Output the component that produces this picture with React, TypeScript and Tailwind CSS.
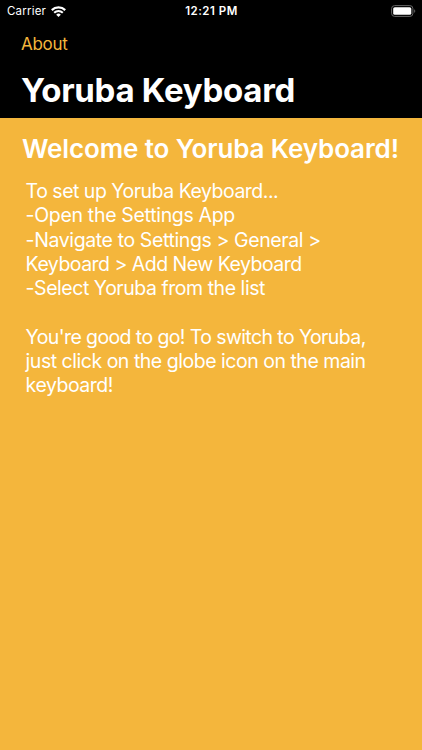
import React from "react";

const steps = [
  { text: "To set up Yoruba Keyboard...", spacing: "tracking-[-0.5px]" },
  { text: "-Open the Settings App", spacing: "tracking-[-0.32px]" },
  { text: "-Navigate to Settings > General >", spacing: "tracking-[-0.39px]" },
  { text: "Keyboard > Add New Keyboard", spacing: "tracking-[-0.52px]" },
  { text: "-Select Yoruba from the list", spacing: "tracking-[-0.46px]" },
  { text: "\u00a0", spacing: "" },
  { text: "You're good to go! To switch to Yoruba,", spacing: "tracking-[-0.6px]" },
  { text: "just click on the globe icon on the main", spacing: "tracking-[-0.48px]" },
  { text: "keyboard!", spacing: "tracking-[-0.48px]" },
];

function Wifi() {
  return (
    <svg className="ml-[5px] h-[11px] w-[15px]" viewBox="0 0 15 11" fill="none" stroke="white">
      <path d="M0.8 4.1a9.5 9.5 0 0 1 13.4 0" strokeWidth="2.2" />
      <path d="M3.2 6.7a6 6 0 0 1 8.6 0" strokeWidth="2" />
      <path d="M7.5 11 5.2 8.7a3.3 3.3 0 0 1 4.6 0z" fill="white" stroke="none" />
    </svg>
  );
}

function Battery() {
  return (
    <svg className="h-[12px] w-[25px]" viewBox="0 0 25 12" fill="none">
      <rect x="0.6" y="0.6" width="21.3" height="10.8" rx="3" stroke="#666" />
      <rect x="2.2" y="2.2" width="18.1" height="7.6" rx="1.6" fill="white" />
      <path d="M23.2 4.2c1.4.5 1.4 3.1 0 3.6z" fill="#666" />
    </svg>
  );
}

export default function App() {
  return (
    <div className="flex h-[750px] w-[422px] flex-col overflow-hidden bg-[#f4b63c] font-['Inter',sans-serif] text-white">
      <header className="h-[118px] shrink-0 bg-black">
        <div className="grid h-[22px] grid-cols-3 items-center pl-[7px] pr-[6px] text-[11.5px] leading-[22px]">
          <div className="flex items-center">
            <span className="tracking-[0.2px]">Carrier</span>
            <Wifi />
          </div>
          <span className="text-center font-semibold tracking-[0.5px]">12:21 PM</span>
          <div className="flex justify-end">
            <Battery />
          </div>
        </div>
        <div className="flex h-[45px] items-center pl-[21px] text-[17px] leading-[25px] text-[#f4b63c]">
          <span className="tracking-[-0.3px]">About</span>
        </div>
        <h1 className="pl-[21px] pt-[3px] text-[33px] font-bold leading-[40px]">
          <span className="whitespace-nowrap tracking-[-0.28px]">Yoruba Keyboard</span>
        </h1>
      </header>
      <main>
        <h2 className="pl-[22px] pt-[15px] text-[26px] font-semibold leading-[32px]">
          <span className="whitespace-nowrap tracking-[-0.12px]">Welcome to Yoruba Keyboard!</span>
        </h2>
        <div className="pl-[25.6px] pt-[14px] text-[19.5px] leading-[24.3px]">
          {steps.map((s, i) => (
            <div key={i} className="whitespace-nowrap">
              <span className={s.spacing}>{s.text}</span>
            </div>
          ))}
        </div>
      </main>
    </div>
  );
}
